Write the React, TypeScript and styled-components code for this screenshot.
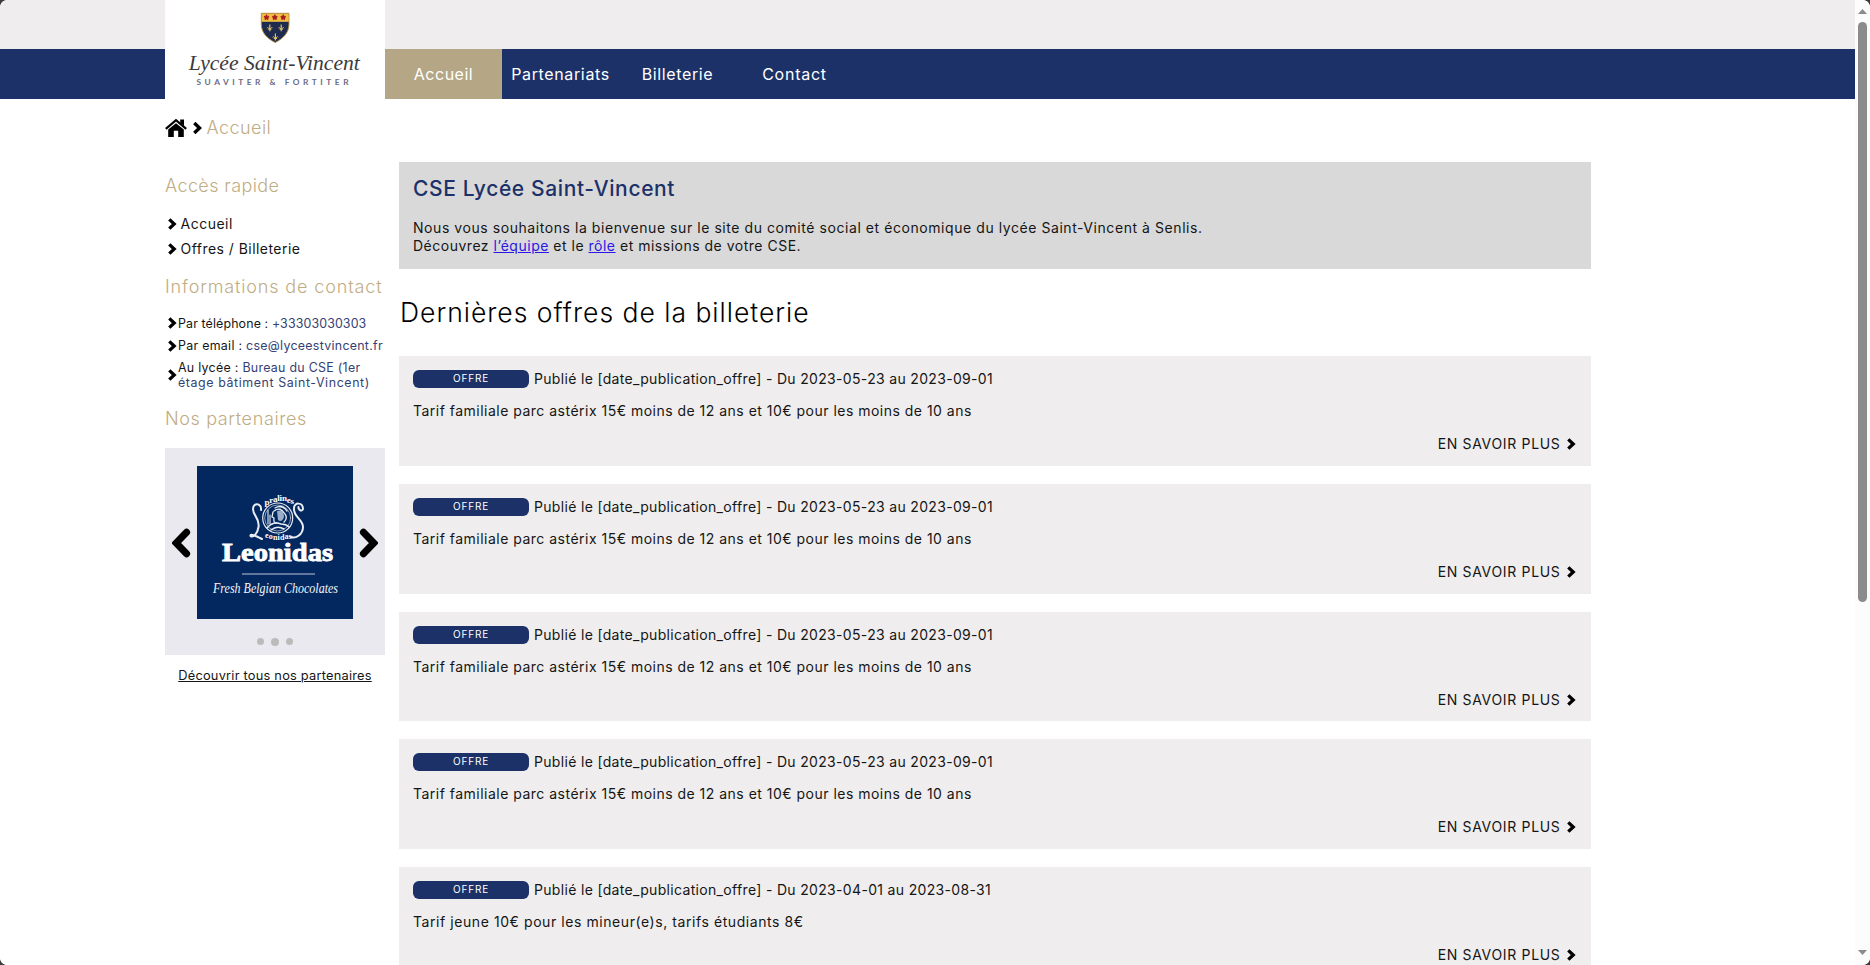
import React from "react";
import styled, { createGlobalStyle } from "styled-components";

const NAVY = "#1c3168";
const GOLD = "#b5a685";
const SOFT_GREY = "#efedee";

const GlobalStyle = createGlobalStyle`
  * { box-sizing: border-box; }
  body {
    margin: 0;
    background: #fff;
    color: #151515;
    font-family: Inter, "Liberation Sans", sans-serif;
    font-size: 14px;
    font-weight: 400;
  }
  h1, h2, h3, p, ul { margin: 0; padding: 0; font-weight: inherit; }
  ul { list-style: none; }
`;

const Viewport = styled.div`
  position: relative;
  display: flex;
  width: 100%;
  height: 965px;
  overflow: hidden;
`;

const Page = styled.div`
  flex: 1;
  min-width: 0;
  height: 965px;
  overflow: hidden;
`;

/* ---------- header ---------- */

const Header = styled.header`
  display: flex;
  align-items: flex-end;
  height: 99px;
  padding-left: 165px;
  background: linear-gradient(${SOFT_GREY} 49px, ${NAVY} 49px);
`;

const LogoBox = styled.a`
  display: block;
  width: 220px;
  height: 99px;
  background: #fff;
`;

const Nav = styled.nav`
  display: flex;
  height: 50px;
`;

const NavItem = styled.a<{ $active?: boolean; $track: number }>`
  display: flex;
  align-items: center;
  justify-content: center;
  width: 117px;
  color: #fff;
  background: ${(p) => (p.$active ? GOLD : "transparent")};
  font-size: 16px;
  letter-spacing: ${(p) => p.$track}px;
`;

/* ---------- layout ---------- */

const Breadcrumb = styled.div`
  display: flex;
  align-items: center;
  height: 24px;
  margin: 17px 0 0 165px;
`;

const Crumb = styled.span`
  margin-left: 3.5px;
  color: #c0ad84;
  font-size: 18px;
  font-weight: 300;
  line-height: 24px;
  letter-spacing: 0.45px;
`;

const Columns = styled.div`
  display: flex;
  align-items: flex-start;
  gap: 14px;
  margin: 22px 264px 0 165px;
`;

const Sidebar = styled.aside`
  flex: none;
  width: 220px;
  padding-top: 12px;
`;

const Main = styled.main`
  flex: 1;
  min-width: 0;
`;

/* ---------- sidebar ---------- */

const SideTitle = styled.h3<{ $track: number }>`
  color: #c0ad84;
  font-size: 18px;
  font-weight: 300;
  line-height: 24px;
  letter-spacing: ${(p) => p.$track}px;
  white-space: nowrap;
`;

const QuickList = styled.ul`
  display: grid;
  gap: 5px;
  margin: 16px 0;
  padding-left: 2px;
`;

const QuickItem = styled.li<{ $track: number }>`
  display: flex;
  align-items: center;
  gap: 3.5px;
  line-height: 20px;
  letter-spacing: ${(p) => p.$track}px;
`;

const ContactList = styled.ul`
  display: grid;
  gap: 6.5px;
  margin: 16px 0 16.5px;
  padding-left: 2px;
`;

const ContactItem = styled.li`
  display: flex;
  align-items: center;
  gap: 1px;
  font-size: 12.4px;
  line-height: 15px;
  min-height: 16px;
`;

const ContactLine = styled.span<{ $track: number }>`
  display: block;
  white-space: nowrap;
  letter-spacing: ${(p) => p.$track}px;
`;

const Value = styled.span`
  color: #343f73;
`;

const Carousel = styled.div`
  height: 207px;
  margin-top: 17.5px;
  padding-top: 18px;
  background: #e9e9ef;
`;

const Slide = styled.div`
  display: flex;
  align-items: center;
  justify-content: center;
  gap: 6px;
`;

const Dots = styled.div`
  display: flex;
  align-items: center;
  justify-content: center;
  gap: 7px;
  height: 8px;
  margin-top: 18.5px;
`;

const Dot = styled.i<{ $size: number }>`
  width: ${(p) => p.$size}px;
  height: ${(p) => p.$size}px;
  border-radius: 50%;
  background: #bbb;
`;

const AllPartners = styled.a`
  display: block;
  margin-top: 13px;
  text-align: center;
  text-decoration: underline;
  text-underline-offset: 1px;
  font-size: 12.8px;
  line-height: 16px;
  letter-spacing: 0.23px;
  white-space: nowrap;
`;

/* ---------- main column ---------- */

const Banner = styled.section`
  height: 107px;
  padding: 13.5px 14px 0;
  background: #d9d9d9;
`;

const BannerTitle = styled.h1`
  color: ${NAVY};
  font-size: 21px;
  font-weight: 500;
  line-height: 26px;
  letter-spacing: 0.63px;
`;

const BannerText = styled.p`
  margin-top: 17px;
  line-height: 18px;
`;

const BannerLine = styled.span<{ $track: number }>`
  display: block;
  white-space: nowrap;
  letter-spacing: ${(p) => p.$track}px;
  a { color: #2a17e6; text-decoration: underline; }
`;

const SectionTitle = styled.h2`
  margin: 27px 0 28px 1px;
  color: #000;
  font-size: 26.5px;
  font-weight: 300;
  line-height: 32px;
  letter-spacing: 0.99px;
`;

const Offers = styled.div`
  display: grid;
  gap: 18px;
`;

const OfferCard = styled.article`
  height: 109.75px;
  padding: 14px;
  background: ${SOFT_GREY};
  line-height: 18px;
`;

const OfferHead = styled.div`
  display: flex;
  gap: 5px;
`;

const Badge = styled.span`
  width: 116px;
  height: 18px;
  border-radius: 6px;
  background: ${NAVY};
  color: #fff;
  font-size: 10px;
  line-height: 17px;
  letter-spacing: 0.8px;
  text-align: center;
`;

const OfferText = styled.p<{ $track: number }>`
  letter-spacing: ${(p) => p.$track}px;
  white-space: nowrap;
`;

const OfferBody = styled.div`
  margin: 14px 0 15px;
`;

const More = styled.a`
  display: flex;
  align-items: center;
  justify-content: flex-end;
  gap: 5px;
  padding-right: 1.5px;
  letter-spacing: 0.67px;
`;

/* ---------- window chrome ---------- */

const ScrollTrack = styled.div`
  display: flex;
  flex-direction: column;
  align-items: center;
  width: 15px;
  height: 965px;
  padding: 9px 0 10px;
  background: #fcfcfc;
`;

const ScrollThumb = styled.div`
  width: 9px;
  height: 580px;
  margin: 8px 0 auto;
  border-radius: 5px;
  background: #8b8b8b;
`;

const Corner = styled.i<{ $v: "top" | "bottom"; $h: "left" | "right" }>`
  position: absolute;
  ${(p) => p.$v}: 0;
  ${(p) => p.$h}: 0;
  width: 7px;
  height: 7px;
  background: radial-gradient(
    circle at ${(p) => (p.$h === "left" ? "100%" : "0")} ${(p) => (p.$v === "top" ? "100%" : "0")},
    transparent 6.6px,
    #3a3a3a 7.4px
  );
`;

/* ---------- drawings ---------- */

const ChevronIcon = styled.svg`
  flex: none;
  width: 10px;
  height: 14px;
`;

const Chevron = () => (
  <ChevronIcon viewBox="0 0 10 14">
    <path d="M2.3 2.4 L7.2 7 L2.3 11.6" fill="none" stroke="#000" strokeWidth="3.3" />
  </ChevronIcon>
);

const Arrow = ({ flip }: { flip?: boolean }) => (
  <svg width="19" height="30" viewBox="0 0 19 30">
    <path
      d={flip ? "M14.6 4.3 L4.2 15 L14.6 25.7" : "M4.4 4.3 L14.8 15 L4.4 25.7"}
      fill="none"
      stroke="#000"
      strokeWidth="7"
      strokeLinecap="round"
      strokeLinejoin="miter"
    />
  </svg>
);

const Home = () => (
  <svg width="22" height="18" viewBox="0 0 22 18">
    <path d="M15.2 0.5 H19 V7 L15.2 4Z" />
    <path d="M0.8 9.8 L11 1.2 L21.2 9.8" fill="none" stroke="#000" strokeWidth="2.2" />
    <path d="M3.2 10.6 L11 4.2 L18.8 10.6 V18 H13.2 V11.8 H8.8 V18 H3.2Z" />
  </svg>
);

const Lily = ({ x, y }: { x: number; y: number }) => (
  <g transform={`translate(${x} ${y})`} fill="none" stroke="#e0c06a" strokeWidth="0.9">
    <path d="M0 -3.4 V3.4 M-1.6 1.4 H1.6" strokeWidth="1.2" />
    <path d="M-2.8 0.4 Q-2.4 -1.6 -0.5 1.2 M2.8 0.4 Q2.4 -1.6 0.5 1.2" />
  </g>
);

const SHIELD = "M96.3 13.3 H124 V24 C124 33 118 38.5 110.2 42.6 C102.3 38.5 96.3 33 96.3 24Z";

const SchoolLogo = () => (
  <svg width="220" height="99" viewBox="0 0 220 99" style={{ display: "block" }}>
    <path d={SHIELD} fill="#1e2b4e" />
    <path d="M96.3 13.3 H124 V21.8 H96.3Z" fill="#f0bf42" />
    <path d={SHIELD} fill="none" stroke="#b9913f" strokeWidth="0.9" />
    {[101.5, 109.8, 118.2].map((x) => (
      <g key={x} fill="#a91c22">
        <circle cx={x} cy="17.4" r="1.6" />
        {[0, 72, 144, 216, 288].map((a) => (
          <circle key={a} cx={x} cy="15.6" r="1" transform={`rotate(${a} ${x} 17.4)`} />
        ))}
      </g>
    ))}
    <Lily x={104.8} y={27.8} />
    <Lily x={116.2} y={27.8} />
    <Lily x={110.4} y={37} />
    <text x="23.8" y="70" textLength="171" lengthAdjust="spacingAndGlyphs" fontFamily="Liberation Serif, serif" fontStyle="italic" fontSize="21.5" fill="#3c3a3c">
      Lycée Saint-Vincent
    </text>
    <text x="31.5" y="85.2" textLength="152" fontFamily="Lato, sans-serif" fontWeight="700" fontSize="8.3" fill="#6a6b86">
      SUAVITER &amp; FORTITER
    </text>
  </svg>
);

const LeonidasLogo = () => (
  <svg width="156" height="153" viewBox="0 0 156 153">
    <rect width="156" height="153" fill="#03285f" />
    <g fill="none" stroke="#e8edf4" strokeLinecap="round">
      <circle cx="80.7" cy="52" r="15" strokeWidth="1.2" />
      <circle cx="80.7" cy="52" r="13" strokeWidth="0.6" />
      <path d="M64 44 C65 37 56 36 56 43 C56 50 63 52 61.5 61 C60.5 68 56 72 53.5 70 C53 67 59 70 65 73" strokeWidth="2" />
      <path d="M97 42 C97 36 106 36 106 43 C105 46 101 44 101.5 41 M97 42 C96 51 106 53 106 61 C106 69 98 73 94 71" strokeWidth="2" />
      <path d="M78 42 Q85 38 90 45 M77 45 Q83 40 88 48 Q91 52 87 56 M76 46 L75 51 L77 52 Q76 57 80 57" strokeWidth="1.3" />
      <path d="M70 62 Q76 55 84 58 Q89 58 92 61 M74 64 Q80 59 87 63" strokeWidth="1.5" />
      <path d="M71 44 V58 M73 49 V58" strokeWidth="1.1" />
    </g>
    <path d="M80 45 Q87 43 87 51 Q85 57 81 54Z" fill="#9badc8" />
    <g fontFamily="Liberation Serif, serif" fontWeight="700" fill="#fff">
      <text fontSize="9" x="67.5 72.3 75.9 80.2 82.6 85 89.8 93.4" y="38.5 36.6 35.6 35 35 35.4 36.6 38.2">pralines</text>
      <text fontSize="8" x="68 71.7 75.9 80.4 82.9 87.4 91.4" y="72.4 73.2 73.8 74 74 73.4 72.6">eonidas</text>
      <text x="25" y="95" fontSize="24.5" textLength="111" lengthAdjust="spacingAndGlyphs" stroke="#fff" strokeWidth="0.8">Leonidas</text>
    </g>
    <rect x="45" y="107" width="73" height="2" fill="#60769c" />
    <text x="16" y="126.5" fontSize="14.5" textLength="125" lengthAdjust="spacingAndGlyphs" fontFamily="Liberation Serif, serif" fontStyle="italic" fill="#f3f6fa">
      Fresh Belgian Chocolates
    </text>
  </svg>
);

const Triangle = ({ down }: { down?: boolean }) => (
  <svg width="9" height="5" viewBox="0 0 9 5">
    <path d={down ? "M0 0 H9 L4.5 5Z" : "M0 5 H9 L4.5 0Z"} fill="#8b8b8b" />
  </svg>
);

/* ---------- data ---------- */

const FAMILY = "Tarif familiale parc astérix 15€ moins de 12 ans et 10€ pour les moins de 10 ans";
const SUMMER = { dates: "Du 2023-05-23 au 2023-09-01", text: FAMILY, track: 0.487 };
const offers = [
  SUMMER,
  SUMMER,
  SUMMER,
  SUMMER,
  {
    dates: "Du 2023-04-01 au 2023-08-31",
    text: "Tarif jeune 10€ pour les mineur(e)s, tarifs étudiants 8€",
    track: 0.57,
  },
];

export default function App() {
  return (
    <Viewport>
      <GlobalStyle />
      <Page>
        <Header>
          <LogoBox><SchoolLogo /></LogoBox>
          <Nav>
            <NavItem $active $track={0.52}>Accueil</NavItem>
            <NavItem $track={0.64}>Partenariats</NavItem>
            <NavItem $track={0.63}>Billeterie</NavItem>
            <NavItem $track={0.76}>Contact</NavItem>
          </Nav>
        </Header>

        <Breadcrumb>
          <Home />
          <svg width="16" height="14" viewBox="0 0 16 14">
            <path d="M7.3 2.1 L12.5 7 L7.3 11.9" fill="none" stroke="#000" strokeWidth="3.4" />
          </svg>
          <Crumb>Accueil</Crumb>
        </Breadcrumb>

        <Columns>
          <Sidebar>
            <SideTitle $track={0.4}>Accès rapide</SideTitle>
            <QuickList>
              <QuickItem $track={0.5}><Chevron />Accueil</QuickItem>
              <QuickItem $track={0.46}><Chevron />Offres / Billeterie</QuickItem>
            </QuickList>

            <SideTitle $track={0.86}>Informations de contact</SideTitle>
            <ContactList>
              <ContactItem>
                <Chevron />
                <ContactLine $track={0.13}>Par téléphone : <Value>+33303030303</Value></ContactLine>
              </ContactItem>
              <ContactItem>
                <Chevron />
                <ContactLine $track={0.29}>Par email : <Value>cse@lyceestvincent.fr</Value></ContactLine>
              </ContactItem>
              <ContactItem>
                <Chevron />
                <div>
                  <ContactLine $track={0.29}>Au lycée : <Value>Bureau du CSE (1er</Value></ContactLine>
                  <ContactLine $track={0.6}><Value>étage bâtiment Saint-Vincent)</Value></ContactLine>
                </div>
              </ContactItem>
            </ContactList>

            <SideTitle $track={0.63}>Nos partenaires</SideTitle>
            <Carousel>
              <Slide>
                <Arrow flip />
                <LeonidasLogo />
                <Arrow />
              </Slide>
              <Dots>
                <Dot $size={7} />
                <Dot $size={8} />
                <Dot $size={7} />
              </Dots>
            </Carousel>
            <AllPartners>Découvrir tous nos partenaires</AllPartners>
          </Sidebar>

          <Main>
            <Banner>
              <BannerTitle>CSE Lycée Saint-Vincent</BannerTitle>
              <BannerText>
                <BannerLine $track={0.563}>
                  Nous vous souhaitons la bienvenue sur le site du comité social et économique du lycée Saint-Vincent à Senlis.
                </BannerLine>
                <BannerLine $track={0.505}>
                  Découvrez <a>l’équipe</a> et le <a>rôle</a> et missions de votre CSE.
                </BannerLine>
              </BannerText>
            </Banner>

            <SectionTitle>Dernières offres de la billeterie</SectionTitle>

            <Offers>
              {offers.map((offer, i) => (
                <OfferCard key={i}>
                  <OfferHead>
                    <Badge>OFFRE</Badge>
                    <OfferText $track={0.325}>Publié le [date_publication_offre] - {offer.dates}</OfferText>
                  </OfferHead>
                  <OfferBody>
                    <OfferText $track={offer.track}>{offer.text}</OfferText>
                  </OfferBody>
                  <More>EN SAVOIR PLUS <Chevron /></More>
                </OfferCard>
              ))}
            </Offers>
          </Main>
        </Columns>
      </Page>

      <ScrollTrack>
        <Triangle />
        <ScrollThumb />
        <Triangle down />
      </ScrollTrack>
      <Corner $v="top" $h="left" />
      <Corner $v="top" $h="right" />
      <Corner $v="bottom" $h="left" />
      <Corner $v="bottom" $h="right" />
    </Viewport>
  );
}
